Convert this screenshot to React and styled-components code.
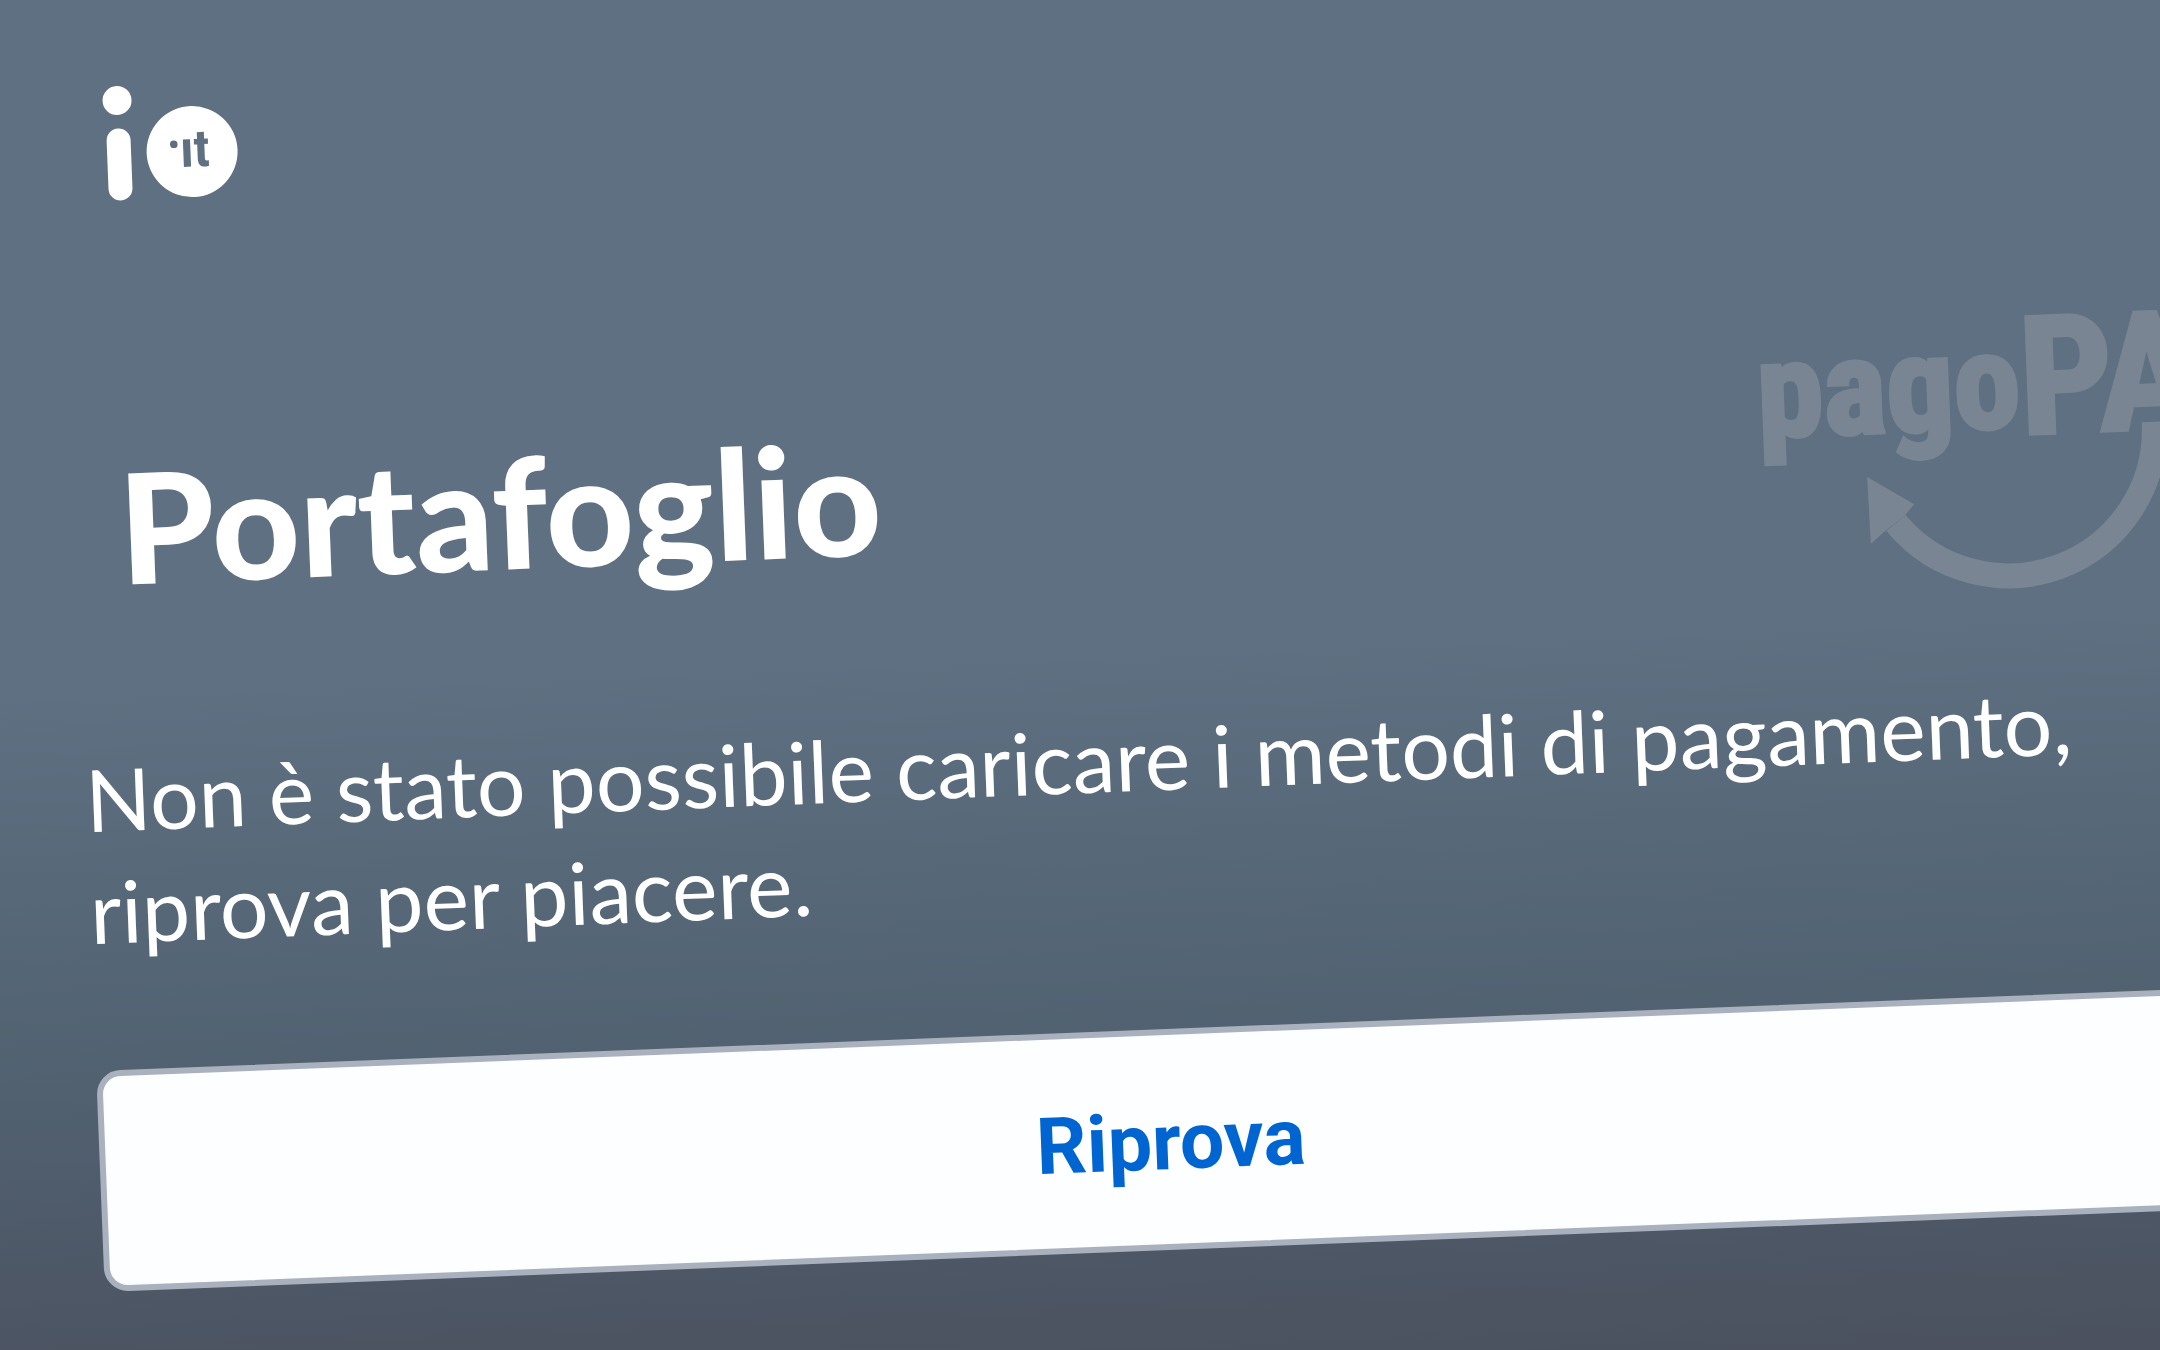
import styled, { createGlobalStyle } from "styled-components";

const GlobalStyle = createGlobalStyle`
  * {
    box-sizing: border-box;
  }
  body {
    margin: 0;
    overflow: hidden;
  }
`;

const Page = styled.main`
  min-height: 100vh;
  overflow: hidden;
  color: #ffffff;
  background: linear-gradient(
    177.75deg,
    #5f7082 0%,
    #5f7082 48%,
    #576879 62%,
    #516170 76%,
    #4d5766 90%,
    #4b515e 100%
  );
`;

/* the screen is tilted, so it runs a little past the right edge */
const Screen = styled.div`
  display: flex;
  flex-direction: column;
  width: calc(100% + 90px);
  padding: 90px 54px 0;
  transform: rotate(-2.25deg);
  transform-origin: 0 0;
`;

const Header = styled.header`
  padding-left: 44px;
  svg {
    display: block;
  }
`;

const TitleRow = styled.div`
  display: flex;
  justify-content: space-between;
  align-items: center;
  margin-top: 184px;
  padding-left: 44px;
  svg {
    display: block;
    flex-shrink: 0;
    overflow: visible;
  }
`;

const Title = styled.h1`
  margin: 0;
  font-family: Lato, "Open Sans", sans-serif;
  font-size: 153px;
  font-weight: 900;
  line-height: 160px;
`;

const Message = styled.p`
  margin: 76px 0 104px;
  font-family: Lato, "Open Sans", sans-serif;
  font-size: 86px;
  font-weight: 400;
  line-height: 112px;
`;

const RetryButton = styled.button`
  width: 100%;
  height: 221px;
  padding: 4px 0 0;
  border: 6px solid #a9b1be;
  border-radius: 24px;
  background: #fcfeff;
  color: #0065d1;
  font-family: Roboto, sans-serif;
  font-size: 79px;
  font-weight: 700;
  cursor: pointer;
`;

const LogoText = styled.text`
  font-family: "Roboto Condensed", Roboto, sans-serif;
  font-size: ${(p) => p.$size}px;
  font-weight: 700;
`;

function IoLogo() {
  return (
    <svg width="140" height="116" viewBox="0 0 140 116" role="img" aria-label="io.it">
      <g fill="#ffffff">
        <circle cx="15" cy="15" r="14.5" />
        <rect x="3" y="43" width="24" height="72" rx="12" />
        <circle cx="88" cy="69" r="45.5" />
      </g>
      <g fill="#5f7082">
        <circle cx="70" cy="61" r="3.8" />
        <LogoText $size={52} x="76" y="84">
          ıt
        </LogoText>
      </g>
    </svg>
  );
}

function PagoPaLogo() {
  return (
    <svg width="456" height="280" viewBox="0 0 456 280" role="img" aria-label="pagoPA" fill="#7a8593">
      <g stroke="#7a8593" strokeWidth="4">
        <LogoText $size={134} x="0" y="116">
          pago
        </LogoText>
        <LogoText $size={164} x="263" y="123">
          PA
        </LogoText>
      </g>
      <path
        d="M396 116 V120 A146 146 0 0 1 134 207"
        fill="none"
        stroke="#7a8593"
        strokeWidth="25"
      />
      <path d="M107 160 L153 189 L142 201 L121 216 L108 227 Z" />
    </svg>
  );
}

function App() {
  return (
    <>
      <GlobalStyle />
      <Page>
        <Screen>
          <Header>
            <IoLogo />
          </Header>
          <TitleRow>
            <Title>Portafoglio</Title>
            <PagoPaLogo />
          </TitleRow>
          <Message>
            Non è stato possibile caricare i metodi di pagamento, riprova per
            piacere.
          </Message>
          <RetryButton type="button">Riprova</RetryButton>
        </Screen>
      </Page>
    </>
  );
}

export default App;
